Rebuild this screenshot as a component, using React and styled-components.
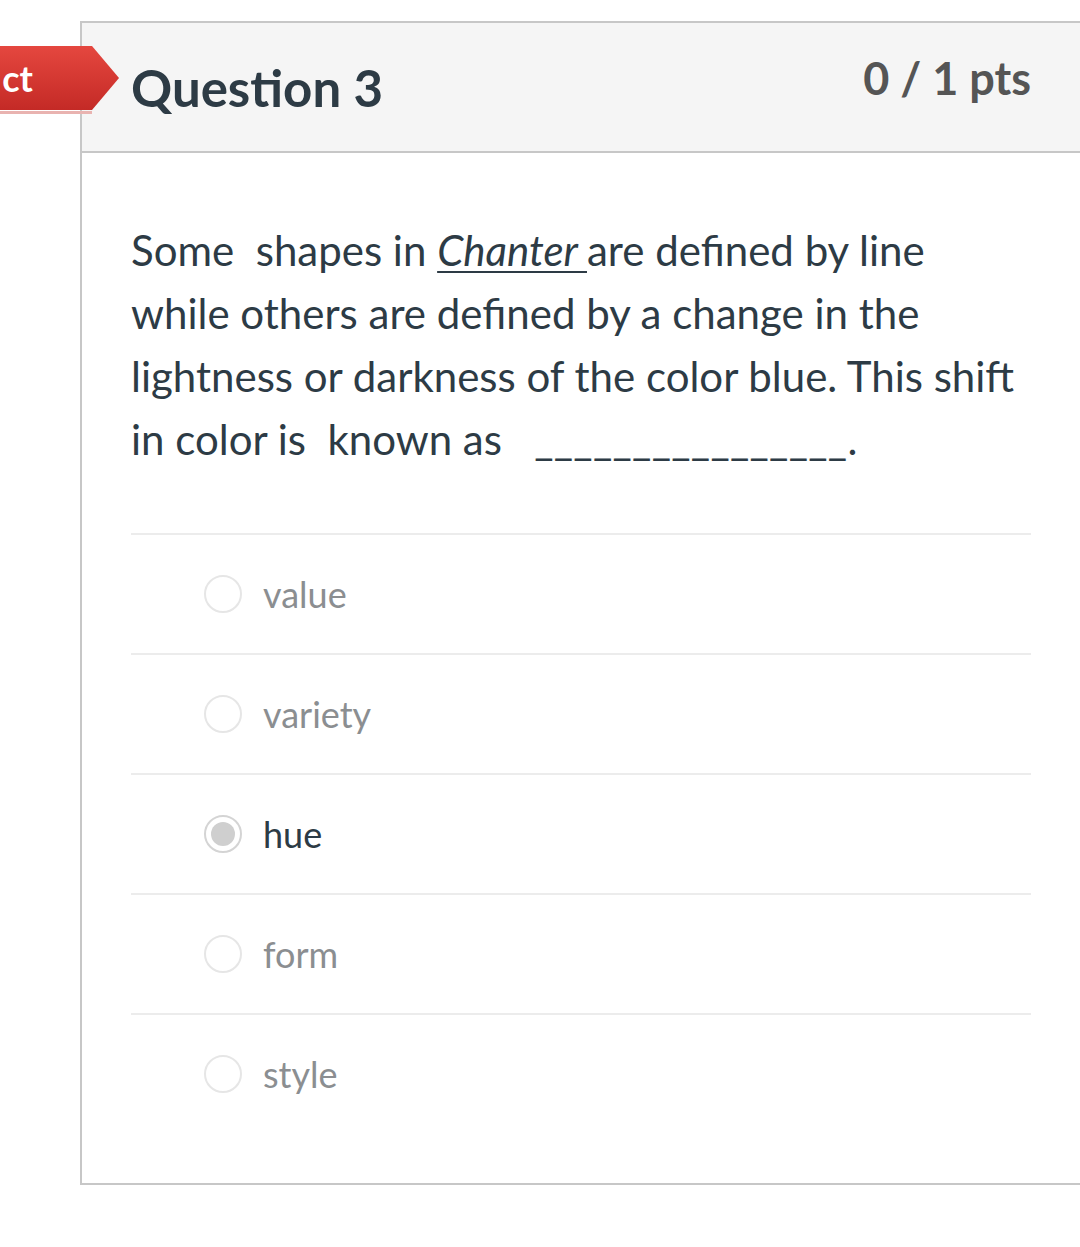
import styled, { createGlobalStyle } from "styled-components"

const Global = createGlobalStyle`
body{
  margin:0;
  background:#fff;
  font-family:Lato, "Open Sans", sans-serif;
  overflow:hidden;
}
`;

const Page = styled.div`
position:relative;
width:1080px;
height:1247px;
padding-top:21px;
box-sizing:border-box;
`;

const Badge = styled.div`
position:absolute;
left:0;
top:46px;
width:119px;
height:64px;
background:linear-gradient(#e5473f,#c42a26);
clip-path:polygon(0 0,92px 0,119px 50%,92px 100%,0 100%);
color:#fff;
font-size:36px;
font-weight:700;
display:flex;
align-items:center;
justify-content:flex-end;
padding-right:86px;
box-sizing:border-box;
z-index:2;
`;

const BadgeShadow = styled.div`
position:absolute;
left:0;
top:111px;
width:92px;
height:3px;
background:#e9b3b0;
z-index:1;
`;

const Card = styled.div`
margin-left:80px;
width:1020px;
border:2px solid #c7c7c7;
border-right:none;
box-sizing:border-box;
height:1164px;
`;

const Header = styled.div`
background:#f5f5f5;
border-bottom:2px solid #c7c7c7;
height:130px;
box-sizing:border-box;
display:flex;
justify-content:space-between;
padding:0 69px 0 49px;
`;

const Title = styled.h2`
margin:0;
padding-top:34px;
font-size:51px;
font-weight:700;
color:#2d3b45;
`;

const Points = styled.div`
padding-top:28px;
font-size:45px;
font-weight:700;
color:#555;
`;

const Body = styled.div`
padding:66px 69px 0 49px;
`;

const Prompt = styled.p`
margin:0;
font-size:42px;
line-height:63px;
color:#2d3b45;
white-space:pre-wrap;
`;

const Work = styled.span`
font-style:italic;
text-decoration:underline;
text-decoration-thickness:2px;
text-underline-offset:5px;
`;

const Blank = styled.span`
letter-spacing:0.3px;
`;

const Answers = styled.div`
margin-top:62px;
`;

const Row = styled.div`
height:120px;
box-sizing:border-box;
border-top:2px solid #ececec;
display:flex;
align-items:center;
padding-left:73px;
`;

const Radio = styled.span`
width:34px;
height:34px;
border-radius:50%;
border:2px solid ${p => p.checked ? "#d4d4d4" : "#e6e6e6"};
display:flex;
align-items:center;
justify-content:center;
margin-right:21px;
flex-shrink:0;
&::after{
  content:"";
  width:24px;
  height:24px;
  border-radius:50%;
  background:${p => p.checked ? "#cfcfcf" : "transparent"};
}
`;

const Label = styled.span`
font-size:36px;
color:${p => p.checked ? "#2d3b45" : "#8b8e91"};
`;

const answers = ["value", "variety", "hue", "form", "style"]

const App = () => {
  return (
    <Page>
      <Global />
      <Badge>ct</Badge>
      <BadgeShadow />
      <Card>
        <Header>
          <Title>Question 3</Title>
          <Points>0 / 1 pts</Points>
        </Header>
        <Body>
          <Prompt>
            Some  shapes in <Work>Chanter </Work>are defined by line while others are defined by a change in the lightness or darkness of the color blue. This shift in color is  known as   <Blank>________________</Blank>.
          </Prompt>
          <Answers>
            {answers.map(a => (
              <Row key={a}>
                <Radio checked={a === "hue"} />
                <Label checked={a === "hue"}>{a}</Label>
              </Row>
            ))}
          </Answers>
        </Body>
      </Card>
    </Page>
  )
}

export default App
